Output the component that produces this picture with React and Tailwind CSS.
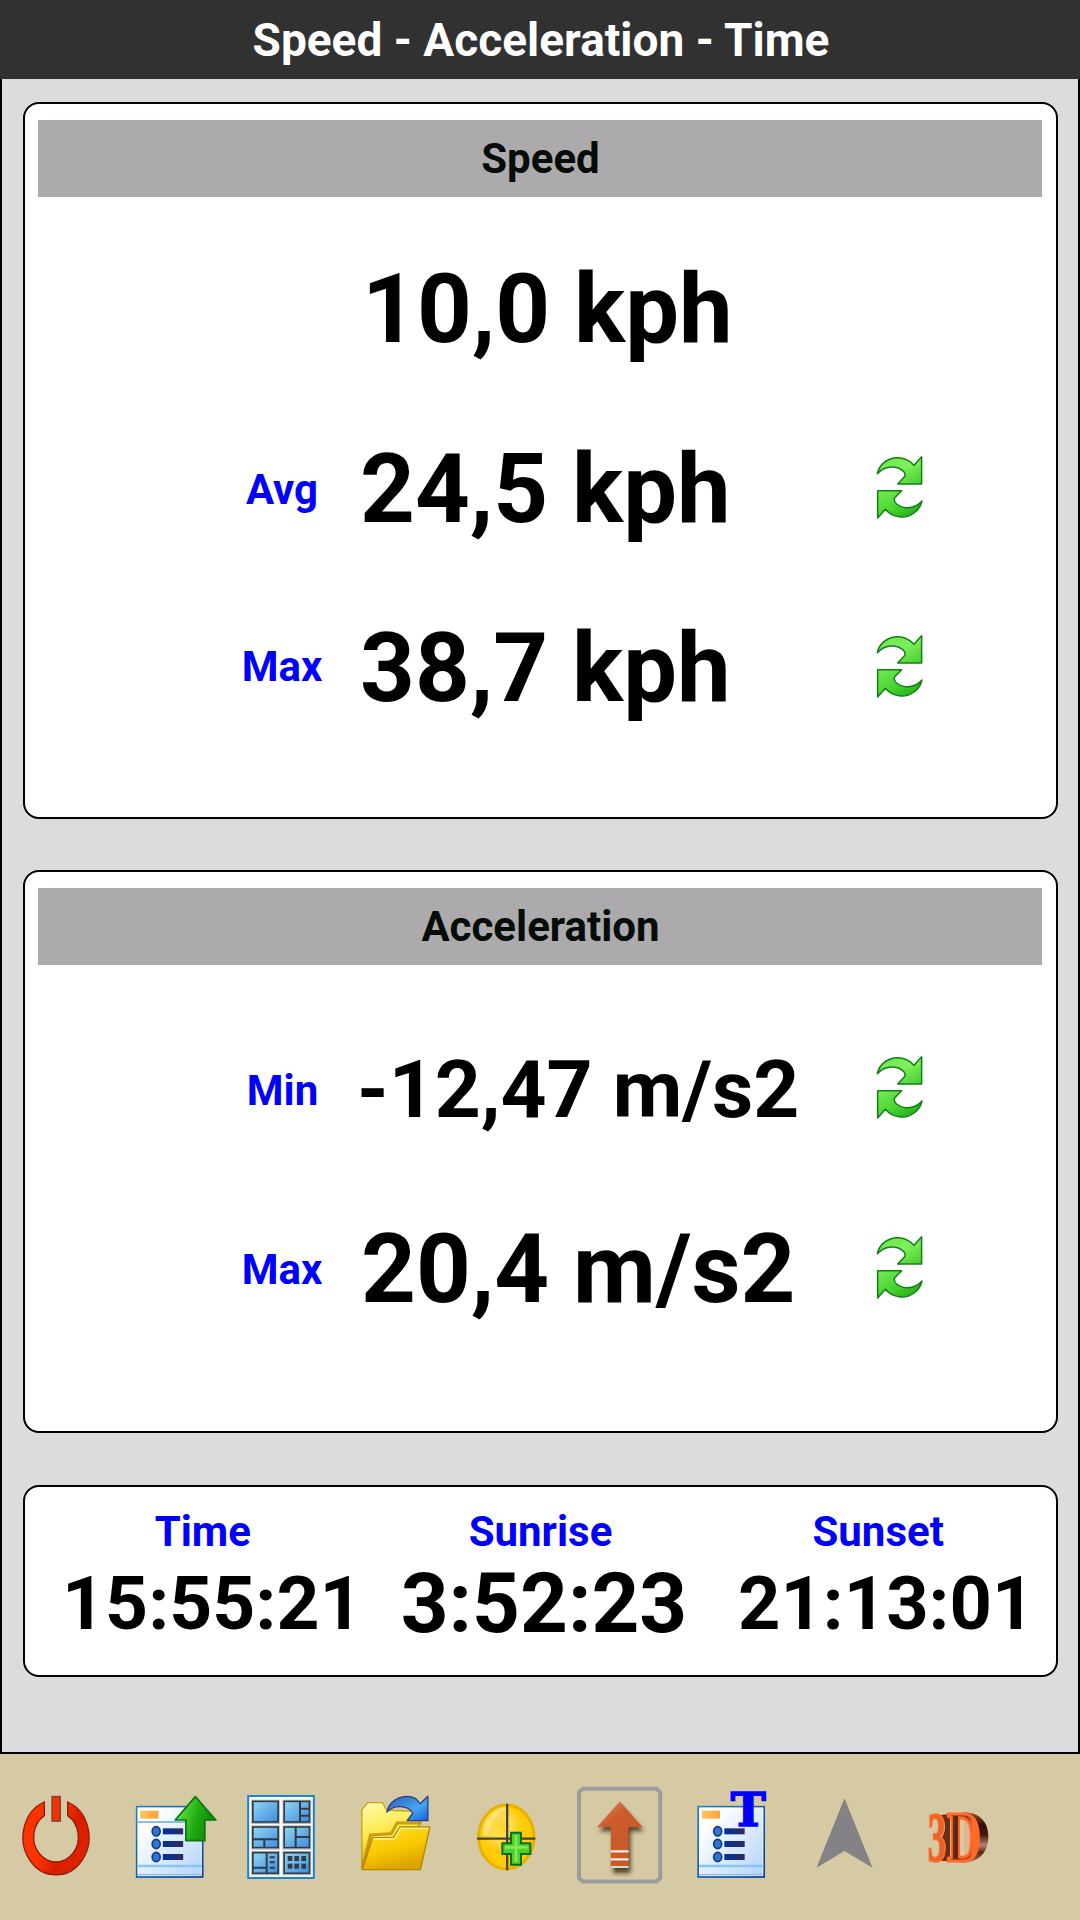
// React imports
import { useState } from "react";

const initialSpeed = [
  { id: "cur", label: "", value: "10,0 kph", row: "h-[180px]", text: "text-[95.7px] pl-[3px] pt-[2px]" },
  { id: "avg", label: "Avg", value: "24,5 kph", row: "h-[180px]", text: "text-[95.7px] pl-[1px] pt-[2px]", labelPos: "pt-[2px]" },
  { id: "max", label: "Max", value: "38,7 kph", row: "h-[178px]", text: "text-[95.7px] pl-[1px] pt-[1px]", labelPos: "pb-[3px]" },
];

const initialAcceleration = [
  { id: "min", label: "Min", value: "-12,47 m/s2", row: "h-[179px]", text: "text-[80.3px] -indent-[2px] pt-[1px]", labelPos: "pt-[2px] pl-[1px]" },
  { id: "max", label: "Max", value: "20,4 m/s2", row: "h-[180px]", text: "text-[95.7px] pl-[2px] pt-[2px]", labelPos: "pt-[2px]" },
];

const times = [
  { label: "Time", value: "15:55:21", text: "text-[75px] pl-[19px]" },
  { label: "Sunrise", value: "3:52:23", text: "text-[83.5px] pl-[7px]" },
  { label: "Sunset", value: "21:13:01", text: "text-[74px] pl-[16px]" },
];

// Shared gradients used by the icons
function IconDefs() {
  return (
    <svg width="0" height="0" className="absolute" aria-hidden="true">
      <defs>
        <linearGradient id="green" x1="0" y1="0" x2="1" y2="1">
          <stop offset="0" stopColor="#6ae050" />
          <stop offset="0.5" stopColor="#80f05c" />
          <stop offset="1" stopColor="#44cc2c" />
        </linearGradient>
        <linearGradient id="greenLow" x1="0" y1="0" x2="1" y2="1">
          <stop offset="0" stopColor="#78ec58" />
          <stop offset="0.5" stopColor="#48d430" />
          <stop offset="1" stopColor="#16a010" />
        </linearGradient>
        <linearGradient id="upGreen" x1="0" y1="0" x2="1" y2="0.3">
          <stop offset="0.2" stopColor="#5ade3c" />
          <stop offset="0.6" stopColor="#22ac14" />
          <stop offset="1" stopColor="#0c8a08" />
        </linearGradient>
        <linearGradient id="red" x1="0" y1="0" x2="1" y2="0.5">
          <stop offset="0.5" stopColor="#ff3300" />
          <stop offset="0.75" stopColor="#d81c00" />
          <stop offset="1" stopColor="#e02400" />
        </linearGradient>
        <linearGradient id="page" x1="0" y1="0" x2="1" y2="1">
          <stop offset="0.2" stopColor="#ffffff" />
          <stop offset="1" stopColor="#b0d2fc" />
        </linearGradient>
        <linearGradient id="pageEdge" x1="0" y1="0" x2="1" y2="1">
          <stop offset="0" stopColor="#1a82c8" />
          <stop offset="1" stopColor="#0a3c9c" />
        </linearGradient>
        <linearGradient id="orange" x1="0" y1="0" x2="1" y2="0">
          <stop offset="0" stopColor="#ffc45c" />
          <stop offset="1" stopColor="#ffa234" />
        </linearGradient>
        <linearGradient id="navy" x1="0" y1="0" x2="1" y2="0">
          <stop offset="0" stopColor="#03309c" />
          <stop offset="1" stopColor="#2e2a60" />
        </linearGradient>
        <linearGradient id="tile" x1="0" y1="0" x2="1" y2="1">
          <stop offset="0" stopColor="#94d6f0" />
          <stop offset="1" stopColor="#3c8ce0" />
        </linearGradient>
        <linearGradient id="folderBack" x1="0" y1="0" x2="0.3" y2="1">
          <stop offset="0" stopColor="#fffcae" />
          <stop offset="0.5" stopColor="#ffe84a" />
          <stop offset="1" stopColor="#c89608" />
        </linearGradient>
        <linearGradient id="folderFront" x1="0" y1="0" x2="0.4" y2="1">
          <stop offset="0" stopColor="#ffe030" />
          <stop offset="0.6" stopColor="#f8c800" />
          <stop offset="1" stopColor="#dca400" />
        </linearGradient>
        <linearGradient id="blue" x1="0" y1="0" x2="1" y2="1">
          <stop offset="0" stopColor="#2c5cb4" />
          <stop offset="0.6" stopColor="#4aa4f4" />
          <stop offset="1" stopColor="#1460d8" />
        </linearGradient>
        <radialGradient id="gold" cx="0.4" cy="0.35" r="0.62">
          <stop offset="0" stopColor="#ffd430" />
          <stop offset="0.3" stopColor="#ffdc50" />
          <stop offset="0.6" stopColor="#ffcc0c" />
          <stop offset="1" stopColor="#ffc800" />
        </radialGradient>
        <linearGradient id="rust" x1="0" y1="0" x2="0.6" y2="1">
          <stop offset="0" stopColor="#dc9478" />
          <stop offset="0.35" stopColor="#cc5c2c" />
          <stop offset="1" stopColor="#c85824" />
        </linearGradient>
        <linearGradient id="bronze" x1="0" y1="0" x2="0" y2="1">
          <stop offset="0" stopColor="#9c5028" />
          <stop offset="0.25" stopColor="#2e0c00" />
          <stop offset="0.45" stopColor="#4a1c0a" />
          <stop offset="0.65" stopColor="#b88070" />
          <stop offset="0.8" stopColor="#5c2810" />
          <stop offset="1" stopColor="#a87060" />
        </linearGradient>
        <linearGradient id="bronzeFace" x1="0" y1="0" x2="1" y2="0">
          <stop offset="0" stopColor="#8a3c18" />
          <stop offset="0.3" stopColor="#5c240c" />
          <stop offset="0.6" stopColor="#943c14" />
          <stop offset="0.75" stopColor="#ff6a28" />
        </linearGradient>
        <filter id="soft" x="-30%" y="-30%" width="160%" height="160%">
          <feGaussianBlur stdDeviation="6" />
        </filter>
      </defs>
    </svg>
  );
}

function RefreshIcon() {
  return (
    <svg viewBox="50 42 142 194" className="w-[47.3px] h-[64.7px]">
      <g stroke="#128016" strokeWidth="4.5" strokeLinejoin="round">
        <path
          d="M54 98C60 68 90 48 118 50C142 52 155 62 164 73L187 47V129H115L137 106C140 92 122 80 104 78C84 76 66 84 54 98Z"
          fill="url(#green)"
        />
        <path
          d="M188 180C182 210 152 230 124 228C100 226 87 216 78 205L55 231V149H127L105 172C102 186 120 198 138 200C158 202 176 194 188 180Z"
          fill="url(#greenLow)"
        />
      </g>
    </svg>
  );
}

function PowerIcon() {
  return (
    <svg viewBox="0 42 337.5 498" className="w-full h-full">
      <path
        d="M133 186A99 113 0 1 0 203 186V227A67 75 0 1 1 133 227Z"
        fill="url(#red)"
        stroke="#8c1c0c"
        strokeWidth="4"
      />
      <rect x="156.500" y="170" width="24" height="73" fill="#f83000" stroke="#804434" strokeWidth="5" />
    </svg>
  );
}

function ListPage({ topLine }) {
  return (
    <>
      <rect x="408.500" y="200" width="198" height="211" fill="url(#page)" stroke="url(#pageEdge)" strokeWidth="5" />
      <rect x="413" y="204.500" width="189" height="202" fill="none" stroke="#fff" strokeWidth="3" opacity="0.7" />
      <rect x="419" y="212" width="55" height="24" fill="url(#orange)" />
      {topLine && <path d="M411 246H604" stroke="#84bcec" strokeWidth="6" />}
      <path d="M411 378H604" stroke="#8cc4f0" strokeWidth="7" />
      <path d="M411 404H604" stroke="#8cb8ec" strokeWidth="4" />
      {[274, 312, 351].map((y) => (
        <g key={y}>
          <ellipse cx="467" cy={y} rx="12" ry="14" fill="#3474cc" stroke="#103c8c" strokeWidth="5" />
          <rect x="487" y={y - 9} width="61" height="18" fill="url(#navy)" />
        </g>
      ))}
    </>
  );
}

function ListUpIcon() {
  return (
    <svg viewBox="337.5 42 337.5 498" className="w-full h-full">
      <ListPage topLine />
      <path
        d="M584.500 170L646 240H613V302H556V240H524Z"
        fill="url(#upGreen)"
        stroke="#0c7410"
        strokeWidth="5"
        strokeLinejoin="round"
      />
    </svg>
  );
}

function LayoutsIcon() {
  return (
    <svg viewBox="675 42 337.5 498" className="w-full h-full">
      <rect x="744.500" y="168" width="197" height="246" fill="#fafbff" stroke="#1a84d4" strokeWidth="6" />
      <g fill="url(#tile)" stroke="#303c44" strokeWidth="5">
        {[184, 261, 338].map((y) =>
          [758.5, 852.5].map((x) => (
            <g key={`${x}-${y}`}>
              <rect x={x - 3.5} y={y - 3.5} width="83" height="70" fill="none" stroke="#b4b8c0" strokeWidth="3" />
              <rect x={x} y={y} width="76" height="62" />
            </g>
          ))
        )}
      </g>
      <g fill="none" stroke="#303c44" strokeWidth="6">
        <path d="M900 183V246M900 206H928M900 227H928" />
        <path d="M759 298H834M793 298V323" />
        <path d="M887 260V323M887 291H928" />
        <path d="M800 338V400M759 383H800M809 352H824M809 367H824M809 383H824" />
      </g>
      <g fill="#303c44">
        {[863, 883, 904].map((x) => (
          <g key={x}>
            <rect x={x} y="348" width="14" height="15" />
            <rect x={x} y="371" width="14" height="15" />
          </g>
        ))}
      </g>
    </svg>
  );
}

function FolderIcon() {
  return (
    <svg viewBox="22.5 42 337.5 498" className="w-full h-full">
      <path
        d="M94 388V209L112 188H156L168 210L245 214L272 248L240 292L110 388Z"
        fill="url(#folderBack)"
        stroke="#c8a01c"
        strokeWidth="4"
        strokeLinejoin="round"
      />
      <path d="M96 386L120 285L182 281L200 249H272" fill="none" stroke="#b48408" strokeWidth="9" opacity="0.75" />
      <path
        d="M96 389L126 293H189L208 261H298L270 389Z"
        fill="url(#folderFront)"
        stroke="#b48800"
        strokeWidth="4"
        strokeLinejoin="round"
      />
      <path d="M128 297H192L210 265H294" fill="none" stroke="#fff6a0" strokeWidth="4" />
      <path
        d="M169 216C176 178 222 158 256 176L269 191L292 169V242H230L247 219C230 194 190 194 169 216Z"
        fill="url(#blue)"
        stroke="#283c84"
        strokeWidth="4"
        strokeLinejoin="round"
      />
    </svg>
  );
}

function AddPointIcon() {
  return (
    <svg viewBox="360 42 337.5 498" className="w-full h-full">
      <ellipse cx="529" cy="291" rx="83" ry="96" fill="url(#gold)" stroke="#e8b000" strokeWidth="9" />
      <path d="M458 286C460 240 490 206 526 202V212C496 222 478 250 474 286Z" fill="#ffe880" opacity="0.8" />
      <path d="M531.500 191V391M441 296H616" stroke="#48423a" strokeWidth="7" />
      <path
        d="M543 278H573V310H601V342H573V374H543V342H517V310H543Z"
        fill="#4cd02c"
        stroke="#0a7010"
        strokeWidth="6"
      />
      <path d="M558 286V366M525 322H593" stroke="#94f060" strokeWidth="8" opacity="0.8" />
    </svg>
  );
}

function NorthUpIcon() {
  return (
    <svg viewBox="697.5 42 337.5 498" className="w-full h-full">
      <path
        d="M757 146.500H978L989 157V415L978 424.500H757L745.500 415V157Z"
        fill="none"
        stroke="#9c9c9c"
        strokeWidth="12"
      />
      <path
        d="M872 198L940 274H900V400H848V274H806Z"
        fill="#241c00"
        opacity="0.75"
        filter="url(#soft)"
      />
      <path d="M868 184L936 262H894V384H841V262H799Z" fill="url(#rust)" />
      <path d="M841 334H894M841 358H894" stroke="#fbeee8" strokeWidth="7" />
      <path d="M841 381H894" stroke="#d8d4d0" strokeWidth="6" />
    </svg>
  );
}

function ListTextIcon() {
  return (
    <svg viewBox="45 42 337.5 498" className="w-full h-full">
      <g transform="translate(-294 0)">
        <ListPage />
      </g>
      <text
        x="264.500"
        y="257"
        textAnchor="middle"
        fontSize="141"
        fontWeight="bold"
        fill="#0000ff"
        stroke="#0000ff"
        strokeWidth="5"
        className="font-['DejaVu_Serif',serif]"
      >
        T
      </text>
    </svg>
  );
}

function HeadingIcon() {
  return (
    <svg viewBox="382.5 42 337.5 498" className="w-full h-full">
      <path d="M552 175L636 383L552 333L468 383Z" fill="#848284" />
    </svg>
  );
}

function ThreeDIcon() {
  return (
    <svg viewBox="720 42 337.5 498" className="w-full h-full">
      {/* extruded side */}
      <path d="M905 218C958 214 986 246 985 292C984 340 955 370 900 368C968 350 968 236 905 218Z" fill="url(#bronze)" />
      <path d="M838 226L870 222V364L836 362C862 340 862 310 846 292C860 270 858 240 838 226Z" fill="#6c2c10" />
      <path d="M912 228H932V356H912Z" fill="#e0b490" />
      <g className="font-['Liberation_Serif',serif]" fontSize="215" fontWeight="bold" stroke="#ff6a28">
        <text transform="translate(803 363) scale(0.52 0.98)" fill="#e06430" strokeWidth="7">
          3
        </text>
        <text transform="translate(861 364) scale(0.66 1)" fill="url(#bronzeFace)" strokeWidth="9">
          D
        </text>
      </g>
    </svg>
  );
}

const tools = [
  { name: "Exit", Icon: PowerIcon },
  { name: "Upload page", Icon: ListUpIcon },
  { name: "Layouts", Icon: LayoutsIcon },
  { name: "Open", Icon: FolderIcon },
  { name: "Add point", Icon: AddPointIcon },
  { name: "North up", Icon: NorthUpIcon },
  { name: "Text page", Icon: ListTextIcon },
  { name: "Heading", Icon: HeadingIcon },
  { name: "3D view", Icon: ThreeDIcon },
];

function Reading({ item, onReset }) {
  return (
    <div className={`flex items-center ${item.row}`}>
      <span className={`w-[120px] ml-[184px] text-center text-[42px] leading-none text-[#0000ff] ${item.labelPos || ""}`}>
        {item.label}
      </span>
      <span className={`w-[500px] ml-[17px] leading-none whitespace-nowrap ${item.text}`}>
        {item.value}
      </span>
      {item.label && (
        <button type="button" aria-label={`Reset ${item.label}`} onClick={onReset} className="ml-[17.4px] mb-[4px]">
          <RefreshIcon />
        </button>
      )}
    </div>
  );
}

function Card({ title, className, children }) {
  return (
    <section className={`bg-white border-2 border-black rounded-[16px] pl-[13px] pr-[14px] pt-4 ${className}`}>
      <h2 className="h-[77px] pl-[1px] flex items-center justify-center bg-[#acaaac] text-[#060c08] text-[42px] leading-none">
        {title}
      </h2>
      {children}
    </section>
  );
}

export default function App() {
  const [speed, setSpeed] = useState(initialSpeed);
  const [acceleration, setAcceleration] = useState(initialAcceleration);

  const resetItem = (setter, id, value) => {
    setter((prev) => prev.map((r) => (r.id === id ? { ...r, value } : r)));
  };

  return (
    <div className="w-[1080px] h-[1920px] flex flex-col overflow-hidden font-[Roboto,sans-serif] font-bold text-black">
      <IconDefs />
      {/* Title bar */}
      <header className="h-[79px] pl-[2px] shrink-0 flex items-center justify-center bg-[#313131] text-white text-[46px] leading-none">
        <h1>Speed - Acceleration - Time</h1>
      </header>

      {/* Readings */}
      <main className="h-[1675px] shrink-0 bg-[#dedbde] border-x-2 border-b-2 border-black pl-[21px] pr-[20px] pt-[23px]">
        <Card title="Speed" className="h-[717px]">
          <div className="pt-[22px]">
            {speed.map((item) => (
              <Reading key={item.id} item={item} onReset={() => resetItem(setSpeed, item.id, "0,0 kph")} />
            ))}
          </div>
        </Card>

        <Card title="Acceleration" className="h-[563px] mt-[51px]">
          <div className="pt-[35px]">
            {acceleration.map((item) => (
              <Reading key={item.id} item={item} onReset={() => resetItem(setAcceleration, item.id, "0,0 m/s2")} />
            ))}
          </div>
        </Card>

        <section className="h-[192px] mt-[52px] grid grid-cols-3 bg-white border-2 border-black rounded-[16px] px-[9px] pt-5">
          {times.map((t) => (
            <div key={t.label} className="text-center">
              <p className="text-[42px] leading-[49px] text-[#0000ff]">{t.label}</p>
              <p className={`leading-[95px] ${t.text}`}>{t.value}</p>
            </div>
          ))}
        </section>
      </main>

      {/* Toolbar */}
      <nav className="flex-1 flex bg-[#d6caa5]">
        {tools.map(({ name, Icon }) => (
          <button key={name} type="button" aria-label={name} className="w-[112.5px] h-[166px] shrink-0">
            <Icon />
          </button>
        ))}
      </nav>
    </div>
  );
}
